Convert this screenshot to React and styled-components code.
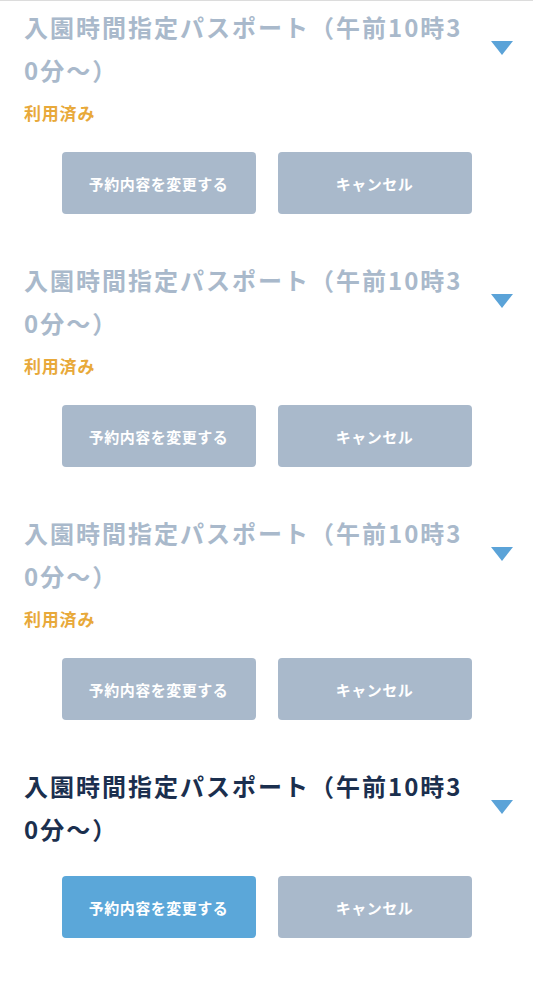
import React from 'react'
import styled, { createGlobalStyle } from 'styled-components'

const GlobalStyle = createGlobalStyle`
  html, body {
    margin: 0;
    padding: 0;
    background: #fff;
  }
  body {
    font-family: 'Noto Sans CJK JP', 'Noto Sans', sans-serif;
  }
`

const reservations = [
  { id: 1, title: '入園時間指定パスポート（午前10時30分〜）', used: true },
  { id: 2, title: '入園時間指定パスポート（午前10時30分〜）', used: true },
  { id: 3, title: '入園時間指定パスポート（午前10時30分〜）', used: true },
  { id: 4, title: '入園時間指定パスポート（午前10時30分〜）', used: false },
]

const App = () => {
  return (
    <>
      <GlobalStyle />
      <List>
        {reservations.map((r) => (
          <Item key={r.id}>
            <Header>
              <Title $used={r.used}>{r.title}</Title>
              <Toggle>
                <svg width='22' height='14' viewBox='0 0 22 14'>
                  <polygon points='0,0 22,0 11,14' fill='#5ba3d8' />
                </svg>
              </Toggle>
            </Header>
            {r.used && <Status>利用済み</Status>}
            <Actions $used={r.used}>
              <Button $primary={!r.used}>予約内容を変更する</Button>
              <Button>キャンセル</Button>
            </Actions>
          </Item>
        ))}
      </List>
    </>
  )
}

const List = styled.main`
  border-top: 1px solid #dcdcdc;
  min-height: 998px;
`

const Item = styled.section`
  padding: 4px 0 40px;
`

const Header = styled.div`
  display: flex;
  align-items: center;
  padding-left: 24px;
`

const Title = styled.h2`
  margin: 0;
  width: 452px;
  font-size: 24px;
  line-height: 43px;
  font-weight: 700;
  letter-spacing: 2px;
  word-break: break-all;
  color: ${(p) => (p.$used ? '#a9b9cb' : '#1b2f4e')};
`

const Toggle = styled.div`
  flex: 1;
  display: flex;
  justify-content: center;
  padding-right: 6px;
  svg {
    display: block;
  }
`

const Status = styled.p`
  margin: 10px 0 0 24px;
  font-size: 17px;
  line-height: 24px;
  font-weight: 700;
  letter-spacing: 0.8px;
  color: #e8a93a;
`

const Actions = styled.div`
  display: flex;
  justify-content: center;
  gap: 22px;
  margin-top: ${(p) => (p.$used ? '27px' : '26px')};
`

const Button = styled.button`
  width: 194px;
  height: 62px;
  border: none;
  border-radius: 4px;
  background: ${(p) => (p.$primary ? '#5ba7d9' : '#a9b9cb')};
  color: #fff;
  font-family: inherit;
  font-size: 15px;
  font-weight: 700;
  letter-spacing: 0.5px;
  cursor: pointer;
`

export default App
